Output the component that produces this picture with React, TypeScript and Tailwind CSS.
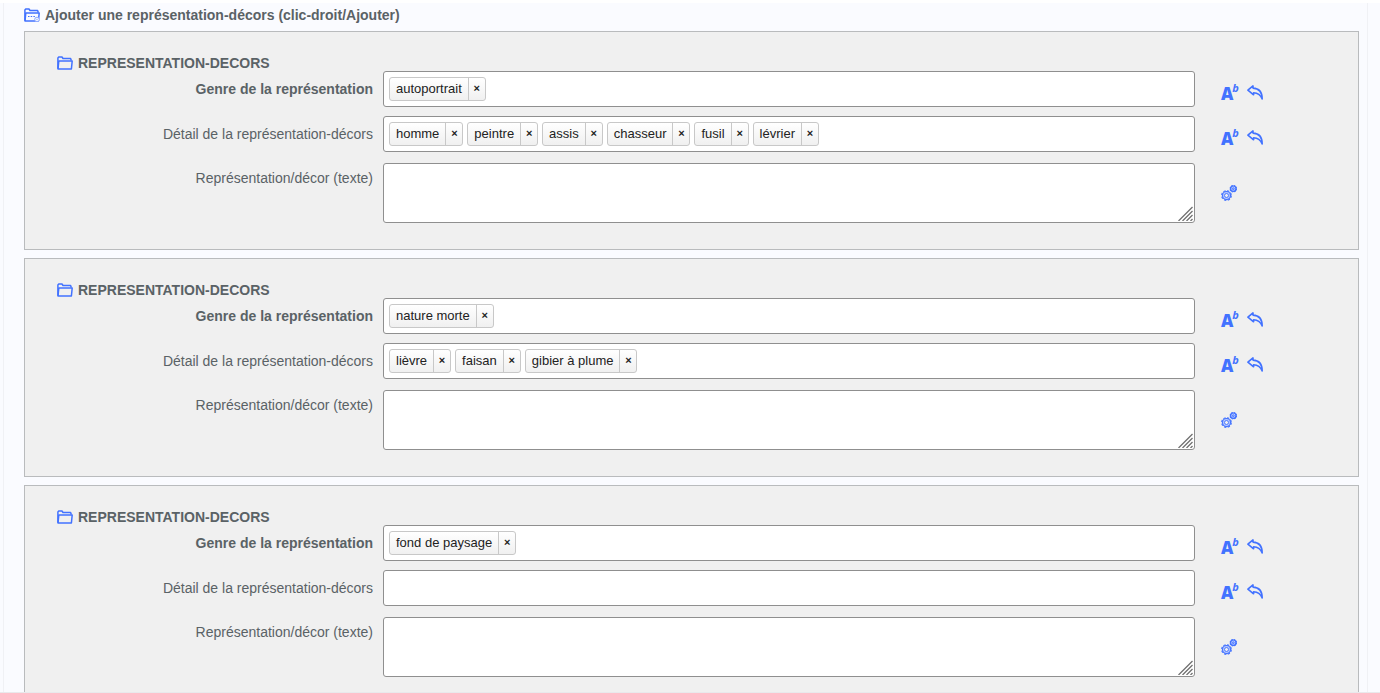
import React, { useId, useState } from "react";

function FolderIcon({ detailed = false }: { detailed?: boolean }) {
  return (
    <svg
      viewBox="0 0 16 14"
      className="h-[14px] w-4 shrink-0"
      fill="none"
      stroke="#4272ff"
      strokeWidth="1.5"
      strokeLinejoin="round"
      aria-hidden="true"
    >
      <path d="M.9 12.800V1.900L1.700 1H5l1 1.500h7.600L14.300 4.500" />
      <path d="M1 13 1.800 5h13.400L14.400 13z" />
      {detailed && (
        <>
          <path d="M4 8.500h8" strokeWidth="1.200" strokeDasharray="1.500 1.200" />
          <circle cx="13" cy="11.500" r="2.300" fill="#fafbff" stroke="#8ba8ff" strokeWidth="1" />
          <circle cx="13" cy="11.500" r=".6" stroke="#8ba8ff" strokeWidth=".6" />
        </>
      )}
    </svg>
  );
}

function UndoIcon() {
  return (
    <svg
      viewBox="0 0 16 15"
      className="h-[15px] w-4"
      fill="none"
      stroke="#4272ff"
      strokeWidth="1.6"
      strokeLinejoin="round"
      aria-hidden="true"
    >
      <path d="M.9 5.200 6 .9v2.200c5.200.2 9.200 3.500 9.200 10.900C13.600 10 11 7.900 6.600 7.700v2.100z" />
    </svg>
  );
}

function GearsIcon() {
  return (
    <svg viewBox="0 0 16 16" className="size-4" fill="none" stroke="#4272ff" aria-hidden="true">
      <circle cx="5.500" cy="10.500" r="4" fill="#b9caff" strokeWidth="1.100" />
      <circle cx="5.500" cy="10.500" r="4.800" strokeWidth="1.200" strokeDasharray="2.300 1.470" />
      <circle cx="5.500" cy="10.500" r="2" fill="#f0f0f0" strokeWidth=".9" />
      <circle cx="12.300" cy="3.700" r="2.700" fill="#b9caff" strokeWidth="1.200" />
      <circle cx="12.300" cy="3.700" r="3.200" strokeWidth="1.100" strokeDasharray="1.700 .81" />
      <circle cx="12.300" cy="3.700" r=".9" strokeWidth=".9" />
    </svg>
  );
}

function ResizeGrip() {
  return (
    <svg
      viewBox="0 0 15 15"
      className="pointer-events-none absolute right-0.5 bottom-0.5 size-[15px]"
      stroke="#707070"
      strokeWidth="1.300"
      aria-hidden="true"
    >
      <path d="M.5 15 14.500 1M4.500 15 14.500 5M8.500 15l6-6M12.500 15l2-2" />
    </svg>
  );
}

function Actions() {
  return (
    <div className="flex h-9 items-start gap-2.5 pt-3">
      <button type="button" aria-label="Alphabet" className="flex w-4 items-start text-[#4272ff]">
        <span className="pt-[3px] font-['Open_Sans',sans-serif] text-[17px] leading-4 font-extrabold">
          A
        </span>
        <span className="-ml-px font-['Open_Sans',sans-serif] text-[11px] leading-[10px] font-bold italic">
          b
        </span>
      </button>
      <button type="button" aria-label="Annuler" className="pt-0.5">
        <UndoIcon />
      </button>
    </div>
  );
}

function TagField({ label, tags, strong }: { label: string; tags: string[]; strong?: boolean }) {
  const id = useId();
  const [items, setItems] = useState(tags);
  return (
    <div className="flex items-start">
      <label
        htmlFor={id}
        className={`w-[348px] shrink-0 pt-2 text-right leading-5 ${strong ? "font-bold" : ""}`}
      >
        {label}
      </label>
      <div className="ml-2.5 flex h-9 min-w-0 flex-1 items-center gap-1 rounded-[3px] border border-[#8f8f8f] bg-white px-[5px]">
        {items.map((tag) => (
          <span
            key={tag}
            className="flex h-6 shrink-0 items-center rounded-[3px] border border-[#c8c8c8] bg-linear-to-b from-white to-[#f0f0f0] text-[13px] text-[#222222]"
          >
            <span className="px-1.5">{tag}</span>
            <button
              type="button"
              aria-label={`Retirer ${tag}`}
              onClick={() => setItems(items.filter((t) => t !== tag))}
              className="flex h-full w-[17px] items-center justify-center border-l border-[#c8c8c8] pb-px text-[11px] font-bold"
            >
              ×
            </button>
          </span>
        ))}
        <input id={id} className="h-full min-w-0 flex-1 bg-transparent outline-none" />
      </div>
      <div className="w-[163px] shrink-0 pl-[26px]">
        <Actions />
      </div>
    </div>
  );
}

function TextField({ label }: { label: string }) {
  const id = useId();
  return (
    <div className="flex items-start">
      <label htmlFor={id} className="w-[348px] shrink-0 pt-[5px] text-right leading-5">
        {label}
      </label>
      <div className="relative ml-2.5 flex min-w-0 flex-1">
        <textarea
          id={id}
          className="h-[60px] w-full resize-none rounded-[3px] border border-[#8f8f8f] bg-white p-2 outline-none"
        />
        <ResizeGrip />
      </div>
      <div className="w-[163px] shrink-0 pt-[22px] pl-[26px]">
        <button type="button" aria-label="Options" className="block">
          <GearsIcon />
        </button>
      </div>
    </div>
  );
}

function Panel({ genre, details }: { genre: string[]; details: string[] }) {
  return (
    <section className="border border-[#b9bbbd] bg-[#f0f0f0] pt-[23px] pb-[26px]">
      <h2 className="flex items-center gap-[5px] pl-8 leading-4 font-bold">
        <FolderIcon />
        REPRESENTATION-DECORS
      </h2>
      <TagField label="Genre de la représentation" tags={genre} strong />
      <div className="mt-[9px]">
        <TagField label="Détail de la représentation-décors" tags={details} />
      </div>
      <div className="mt-[11px]">
        <TextField label="Représentation/décor (texte)" />
      </div>
    </section>
  );
}

const panels = [
  {
    genre: ["autoportrait"],
    details: ["homme", "peintre", "assis", "chasseur", "fusil", "lévrier"],
  },
  { genre: ["nature morte"], details: ["lièvre", "faisan", "gibier à plume"] },
  { genre: ["fond de paysage"], details: [] },
];

export default function App() {
  return (
    <div className="flex h-screen flex-col border-b border-[#e9e9ec] bg-[#fafbff] font-['Liberation_Sans',sans-serif] text-sm text-[#5a6266]">
      <div className="h-[3px] shrink-0 bg-white" />
      <main className="mr-3 ml-[3px] min-h-0 flex-1 overflow-y-auto border-x border-[#f0f1f5] pr-2 pl-5 [scrollbar-width:none]">
        <h1 className="flex h-7 items-center gap-[5px] pb-[5px] font-bold">
          <FolderIcon detailed />
          Ajouter une représentation-décors (clic-droit/Ajouter)
        </h1>
        <div className="flex flex-col gap-2">
          {panels.map((p) => (
            <Panel key={p.genre[0]} genre={p.genre} details={p.details} />
          ))}
        </div>
      </main>
    </div>
  );
}
